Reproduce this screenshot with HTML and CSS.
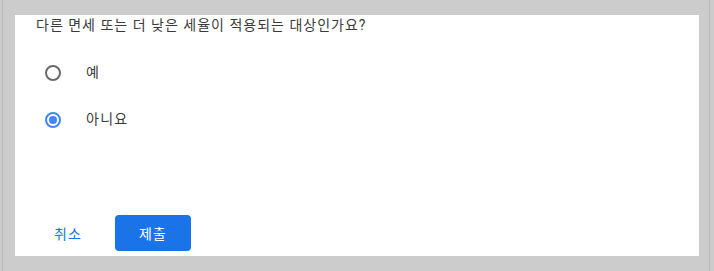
FILE: index.html
```html
<!DOCTYPE html>
<html lang="ko">
<head>
<meta charset="utf-8">
<link rel="stylesheet" href="styles.css">
</head>
<body>
<div class="frame">
  <div class="panel">
    <div class="question">다른 면세 또는 더 낮은 세율이 적용되는 대상인가요?</div>
    <div class="options">
      <div class="option">
        <span class="radio"></span>
        <span class="label">예</span>
      </div>
      <div class="option">
        <span class="radio checked"><span class="dot"></span></span>
        <span class="label">아니요</span>
      </div>
    </div>
    <div class="actions">
      <button class="btn-text">취소</button>
      <button class="btn-primary">제출</button>
    </div>
  </div>
</div>
</body>
</html>
```
FILE: styles.css
```css
html, body {
  margin: 0;
  padding: 0;
  background: #cccccc;
  width: 714px;
  height: 271px;
  overflow: hidden;
  font-family: Roboto, "Noto Sans CJK KR", sans-serif;
}
.frame {
  margin-left: 2px;
  width: 708px;
  height: 271px;
  border-left: 1px solid #b9b9b9;
  border-right: 1px solid #b9b9b9;
  padding: 15px 10px 15px 12px;
  box-sizing: border-box;
}
.panel {
  background: #ffffff;
  height: 241px;
  padding: 0 21px 5px 21px;
  box-sizing: border-box;
  display: flex;
  flex-direction: column;
}
.question {
  font-size: 14px;
  line-height: 20px;
  letter-spacing: 1px;
  color: #3a3a3a;
}
.options {
  margin-top: 14px;
  display: flex;
  flex-direction: column;
}
.option {
  height: 47px;
  display: flex;
  align-items: center;
  padding-left: 9px;
}
.radio {
  width: 16px;
  height: 16px;
  box-sizing: border-box;
  border: 2px solid #6a6a6a;
  border-radius: 50%;
  display: flex;
  align-items: center;
  justify-content: center;
}
.radio.checked {
  border-color: #4285f4;
}
.dot {
  width: 8px;
  height: 8px;
  border-radius: 50%;
  background: #4285f4;
}
.label {
  margin-left: 25px;
  font-size: 14px;
  line-height: 20px;
  padding-bottom: 2px;
  letter-spacing: 1.3px;
  color: #3a3a3a;
}
.actions {
  margin-top: auto;
  display: flex;
  align-items: center;
}
.btn-text {
  font-family: inherit;
  font-size: 14px;
  letter-spacing: 1px;
  color: #1a73e8;
  background: none;
  border: none;
  padding: 0 18px;
  height: 36px;
}
.btn-primary {
  font-family: inherit;
  font-size: 14px;
  letter-spacing: 1px;
  color: #ffffff;
  background: #1a73e8;
  border: none;
  border-radius: 4px;
  width: 76px;
  height: 36px;
  margin-left: 15px;
  padding: 0;
}
```
